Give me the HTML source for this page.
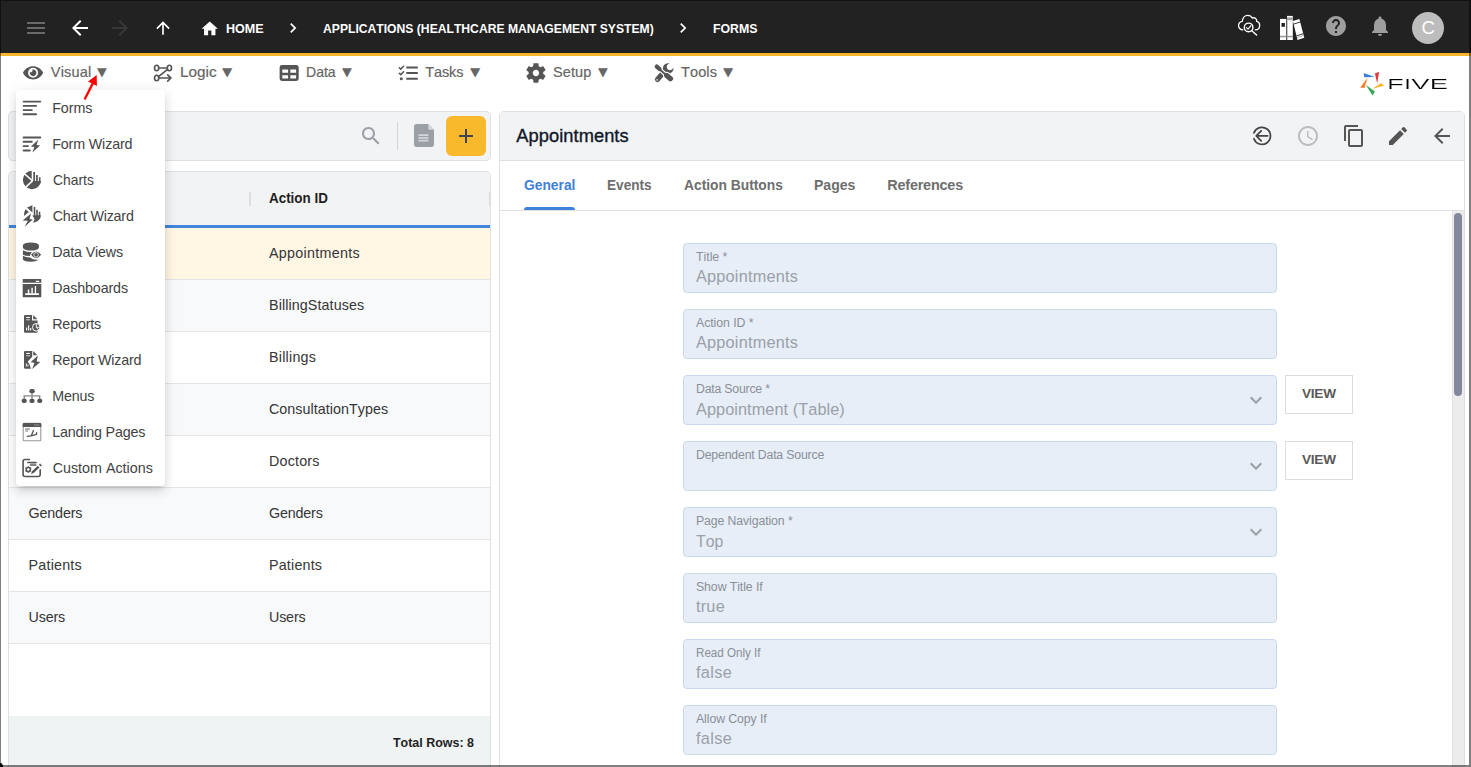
<!DOCTYPE html><html lang="en"><head><meta charset="utf-8"><title>Five - Forms</title><style>
*{box-sizing:border-box;margin:0;padding:0}
html,body{width:1471px;height:767px;overflow:hidden;background:#fff}
body{font-family:"Liberation Sans",sans-serif;position:relative}
.t{position:absolute;white-space:pre;line-height:1;display:block;transform-origin:0 50%;font-kerning:none}
.a{position:absolute}
svg{position:absolute;overflow:visible}
</style></head><body>
<div class="a" style="left:0;top:0;width:1471px;height:53px;background:#222"></div>
<div class="a" style="left:0;top:53px;width:1471px;height:3px;background:#f7b52a"></div>
<svg style="left:23.7px;top:16px" width="24" height="24" viewBox="0 0 24 24" ><path fill="#6a6a6a" d="M3 18h18v-2H3v2zm0-5h18v-2H3v2zm0-7v2h18V6H3z"/></svg>
<svg style="left:68px;top:15.8px" width="24" height="24" viewBox="0 0 24 24" ><path fill="#fff" d="M20 11H7.83l5.59-5.59L12 4l-8 8 8 8 1.41-1.41L7.83 13H20v-2z"/></svg>
<svg style="left:107.6px;top:15.8px" width="24" height="24" viewBox="0 0 24 24" ><path fill="#383838" d="M12 4l-1.41 1.41L16.17 11H4v2h12.17l-5.58 5.59L12 20l8-8z"/></svg>
<svg style="left:153.2px;top:18.2px" width="20" height="20" viewBox="0 0 24 24" ><path fill="#fff" d="M4 12l1.41 1.41L11 7.83V20h2V7.83l5.58 5.59L20 12l-8-8-8 8z"/></svg>
<svg style="left:200.2px;top:18.5px" width="19.5" height="19.5" viewBox="0 0 24 24" ><path fill="#fff" d="M10 20v-6h4v6h5v-8h3L12 3 2 12h3v8z"/></svg>
<span class="t" style="left:225.56px;top:22.10px;font-size:13.4px;font-weight:700;color:#fff;transform:scaleX(0.9386);">HOME</span>
<svg style="left:283px;top:18.3px" width="20" height="20" viewBox="0 0 24 24" ><path fill="#fff" d="M10 6L8.59 7.41 13.17 12l-4.58 4.59L10 18l6-6z"/></svg>
<span class="t" style="left:322.70px;top:22.10px;font-size:13.4px;font-weight:700;color:#fff;transform:scaleX(0.9072);">APPLICATIONS (HEALTHCARE MANAGEMENT SYSTEM)</span>
<svg style="left:673px;top:18.3px" width="20" height="20" viewBox="0 0 24 24" ><path fill="#fff" d="M10 6L8.59 7.41 13.17 12l-4.58 4.59L10 18l6-6z"/></svg>
<span class="t" style="left:712.78px;top:22.10px;font-size:13.4px;font-weight:700;color:#fff;transform:scaleX(0.9198);">FORMS</span>
<svg style="left:0;top:0" width="1471" height="53" viewBox="0 0 1471 53">
<g fill="none" stroke="#fff" stroke-width="1.400" stroke-linecap="round" stroke-linejoin="round">
<g transform="translate(1249 23) scale(0.95) translate(-1249 -23)"><path d="M1242.500 30.200C1239.700 30.200 1237.900 28 1238 25.500C1238.200 22.900 1240 21.400 1242 21.200C1242.300 17.500 1244.800 15 1247.600 15C1250.100 15 1251.700 16.300 1252.500 17.800C1254.800 16.800 1257.200 18.400 1257.200 21.300C1259.200 21.800 1260.300 23.800 1260.200 25.800C1260.100 28.300 1258.300 30.200 1255.600 30.200"/></g>
<circle cx="1248.600" cy="27.400" r="4.300" fill="#222"/>
<path d="M1251.800 30.700L1256.600 35.100"/>
<path stroke-width="1.200" d="M1246.500 27.600L1248 29.100L1251 25.700"/>
</g>
<!-- books -->
<rect x="1280" y="18.900" width="6.300" height="21.100" fill="#fff"/>
<rect x="1281.500" y="23" width="3.400" height="3.800" fill="#222"/>
<rect x="1280" y="35.800" width="6.300" height="1.500" fill="#9a9a9a"/>
<rect x="1287" y="15.900" width="5.800" height="24.100" fill="#fff"/>
<rect x="1287" y="17.400" width="5.800" height="2.900" fill="#a8a8a8"/>
<rect x="1287" y="20.300" width="1" height="19.700" fill="#c8c8c8"/>
<rect x="1287" y="35.800" width="5.800" height="1.500" fill="#9a9a9a"/>
<path fill="#fff" d="M1292.900 20.900L1299.400 18.900L1304.300 37.700L1297.500 40Z"/>
<path stroke="#222" stroke-width="0.900" fill="none" d="M1293.700 24.100L1300.300 22M1296.600 35.800L1303.300 33.700"/>
<path stroke="#9a9a9a" stroke-width="0.800" fill="none" d="M1297 37.600L1303.700 35.500"/>
</svg>
<svg style="left:1324px;top:14px" width="24" height="24" viewBox="0 0 24 24"><path fill="#9e9e9e" d="M12 2C6.480 2 2 6.480 2 12s4.480 10 10 10 10-4.480 10-10S17.520 2 12 2zm1 17h-2v-2h2v2zm2.070-7.750l-.9.920C13.450 12.900 13 13.500 13 15h-2v-.5c0-1.100.45-2.100 1.170-2.830l1.240-1.260c.37-.36.590-.86.590-1.410 0-1.100-.9-2-2-2s-2 .9-2 2H8c0-2.210 1.790-4 4-4s4 1.790 4 4c0 .88-.36 1.680-.93 2.250z"/></svg>
<svg style="left:1368px;top:13.700px" width="24" height="24" viewBox="0 0 24 24"><path fill="#9e9e9e" d="M12 22c1.100 0 2-.9 2-2h-4c0 1.100.89 2 2 2zm6-6v-5c0-3.070-1.640-5.640-4.500-6.320V4c0-.83-.67-1.500-1.500-1.500s-1.500.67-1.500 1.500v.68C7.630 5.360 6 7.920 6 11v5l-2 2v1h16v-1l-2-2z"/></svg>
<div class="a" style="left:1412px;top:12px;width:32px;height:32px;border-radius:50%;background:#bdbdbd"></div>
<span class="t" style="left:1421.400px;top:19.400px;font-size:18.600px;color:#fff">C</span>

<span class="t" style="left:50.84px;top:65.05px;font-size:14.5px;font-weight:400;color:#666;letter-spacing:0.188px;-webkit-text-stroke:0.2px #666;">Visual</span>
<span class="t" style="left:97.26px;top:66.20px;font-size:12.2px;font-weight:400;color:#666;transform:scaleX(1.0418);font-family:'DejaVu Sans',sans-serif;">▼</span>
<span class="t" style="left:179.75px;top:65.05px;font-size:14.5px;font-weight:400;color:#666;transform:scaleX(1.0546);-webkit-text-stroke:0.2px #666;">Logic</span>
<span class="t" style="left:221.96px;top:66.20px;font-size:12.2px;font-weight:400;color:#666;transform:scaleX(1.0955);font-family:'DejaVu Sans',sans-serif;">▼</span>
<span class="t" style="left:305.85px;top:65.05px;font-size:14.5px;font-weight:400;color:#666;transform:scaleX(0.9681);-webkit-text-stroke:0.2px #666;">Data</span>
<span class="t" style="left:342.36px;top:66.20px;font-size:12.2px;font-weight:400;color:#666;transform:scaleX(1.0525);font-family:'DejaVu Sans',sans-serif;">▼</span>
<span class="t" style="left:425.27px;top:65.05px;font-size:14.5px;font-weight:400;color:#666;letter-spacing:-0.105px;-webkit-text-stroke:0.2px #666;">Tasks</span>
<span class="t" style="left:469.96px;top:66.20px;font-size:12.2px;font-weight:400;color:#666;transform:scaleX(1.0955);font-family:'DejaVu Sans',sans-serif;">▼</span>
<span class="t" style="left:553.04px;top:65.05px;font-size:14.5px;font-weight:400;color:#666;letter-spacing:0.094px;-webkit-text-stroke:0.2px #666;">Setup</span>
<span class="t" style="left:597.76px;top:66.20px;font-size:12.2px;font-weight:400;color:#666;transform:scaleX(1.0418);font-family:'DejaVu Sans',sans-serif;">▼</span>
<span class="t" style="left:680.97px;top:65.05px;font-size:14.5px;font-weight:400;color:#666;letter-spacing:0.123px;-webkit-text-stroke:0.2px #666;">Tools</span>
<span class="t" style="left:722.86px;top:66.20px;font-size:12.2px;font-weight:400;color:#666;transform:scaleX(1.0848);font-family:'DejaVu Sans',sans-serif;">▼</span>
<svg style="left:0;top:0" width="800" height="100" viewBox="0 0 800 100">
<!-- eye -->
<g transform="translate(23.05,63.9) scale(0.03481)"><path fill="#555" d="M572.52 241.400C518.290 135.590 410.930 64 288 64S57.680 135.640 3.480 241.410a32.350 32.350 0 0 0 0 29.190C57.710 376.410 165.070 448 288 448s230.320-71.640 284.520-177.410a32.350 32.350 0 0 0 0-29.190zM288 400a144 144 0 1 1 144-144 143.930 143.930 0 0 1-144 144zm0-240a95.310 95.310 0 0 0-25.310 3.790 47.850 47.850 0 0 1-66.900 66.900A95.780 95.780 0 1 0 288 160z"/></g>
<!-- logic -->
<g fill="none" stroke="#555" stroke-width="1.65" stroke-linecap="round" stroke-linejoin="round">
<ellipse cx="156.65" cy="68" rx="2.1" ry="2.75"/><ellipse cx="169.4" cy="68" rx="2.1" ry="2.75"/><ellipse cx="156.65" cy="77.95" rx="2.1" ry="2.75"/>
<path d="M158.9 68H167.2M167.6 69.3L158.5 76.6M158.9 77.95H170.9M167.7 74.8L170.9 77.95L167.7 81.1"/>
</g>
<!-- data -->
<path fill="#555" fill-rule="evenodd" d="M282 65H296.300A2.400 2.400 0 0 1 298.700 67.400V78.500A2.400 2.400 0 0 1 296.300 80.900H282A2.400 2.400 0 0 1 279.600 78.500V67.400A2.400 2.400 0 0 1 282 65ZM282.300 69.600V72.800H288.100V69.600ZM290.300 69.600V72.800H296.100V69.600ZM282.300 75.200V78.400H288.100V75.200ZM290.300 75.200V78.400H296.100V75.200Z"/>
<!-- tasks -->
<g fill="none" stroke="#555" stroke-width="2" stroke-linecap="butt">
<path d="M406.300 67.600H417.800M406.300 73.100H417.800M406.300 78.700H417.800"/>
<path stroke-width="1.500" stroke-linecap="round" stroke-linejoin="round" d="M399.300 67.700L400.700 69.100L403.600 66.200M399.300 73.200L400.700 74.600L403.600 71.700"/>
</g>
<circle cx="401.300" cy="78.700" r="1.500" fill="#555"/>
<!-- gear -->
<g transform="translate(523.7,60.75) scale(1.02)"><path fill="#555" d="M19.140 12.940c.04-.3.060-.61.060-.94 0-.32-.02-.64-.07-.94l2.030-1.580c.18-.14.230-.41.120-.61l-1.920-3.320c-.12-.22-.37-.29-.59-.22l-2.390.96c-.5-.38-1.030-.7-1.620-.94l-.36-2.540c-.04-.24-.24-.41-.48-.41h-3.840c-.24 0-.43.170-.47.410l-.36 2.540c-.59.240-1.130.57-1.620.94l-2.390-.96c-.22-.08-.47 0-.59.220L2.740 8.870c-.12.210-.08.470.12.610l2.030 1.580c-.05.300-.09.630-.09.940s.02.640.07.940l-2.030 1.580c-.18.140-.23.410-.12.610l1.920 3.320c.12.220.37.290.59.220l2.390-.96c.5.380 1.030.7 1.620.94l.36 2.540c.05.240.24.410.48.410h3.840c.24 0 .44-.17.470-.41l.36-2.540c.59-.24 1.130-.56 1.620-.94l2.390.96c.22.080.47 0 .59-.22l1.920-3.320c.12-.22.070-.47-.12-.61l-2.010-1.580zM12 15.1c-1.71 0-3.1-1.39-3.1-3.1s1.39-3.1 3.1-3.1 3.1 1.39 3.1 3.1-1.39 3.1-3.1 3.1z"/></g>
<!-- tools -->
<path fill="none" stroke="#555" stroke-width="5" stroke-linecap="round" d="M662.6 73.500L657.400 79.500"/>
<path fill="#555" d="M669.600 63.400A5.300 5.300 0 1 0 673.400 67.600A3.500 3.500 0 0 1 667.200 68.700A3.500 3.500 0 0 1 669.600 63.400Z"/>
<g fill="none" stroke="#fff">
<path stroke-width="4.200" d="M659.800 69.500L665.600 74.600"/>
<path stroke-width="7.400" stroke-linecap="round" d="M666.900 75.700L670.500 78.700"/>
</g>
<g fill="none" stroke="#555">
<path stroke-width="4.300" stroke-linecap="round" d="M656.800 66.600L659.500 69"/>
<path stroke-width="1.900" d="M659.500 69.200L666.400 75.300"/>
<path stroke-width="5.200" stroke-linecap="round" d="M666.700 75.500L670.500 78.700"/>
</g>
<rect x="656.300" y="79" width="1.700" height="1.700" rx=".4" fill="#c8c8c8"/>
</svg>

<svg style="left:0;top:0" width="1471" height="100" viewBox="0 0 1471 100">
<path fill="#3b7ddd" d="M1363.700 73L1364.200 77.200L1374.800 77Z"/>
<path fill="#e03a3e" d="M1374.900 73.500L1379.100 71.800L1377.200 83.600Z"/>
<path fill="#f9b52c" d="M1372.300 88.800L1381.200 83.100L1384.200 85.700Z"/>
<path fill="#34a853" d="M1365.900 85.100L1374.900 91.400L1372.600 95.500Z"/>
<path fill="#ff7f27" d="M1367.600 77.700L1360.200 87.400L1364.500 87.900Z"/>
</svg>
<span class="t" style="left:1387.3px;top:76.600px;font-size:14.500px;color:#000;transform:scaleX(1.89);will-change:transform;-webkit-text-stroke:0.180px #fff">FIVE</span>

<div class="a" style="left:8px;top:111px;width:483px;height:50px;background:#f2f3f5;border:1px solid #dfe0e2;border-radius:5px"></div>
<svg style="left:359px;top:124.2px" width="24" height="24" viewBox="0 0 24 24"><path fill="#9aa0a6" d="M15.5 14h-.79l-.28-.27C15.41 12.59 16 11.11 16 9.5 16 5.91 13.09 3 9.500 3S3 5.910 3 9.500 5.910 16 9.500 16c1.610 0 3.090-.59 4.230-1.570l.27.28v.79l5 4.990L20.490 19l-4.990-5zm-6 0C7.010 14 5 11.990 5 9.500S7.010 5 9.500 5 14 7.010 14 9.500 11.990 14 9.500 14z"/></svg>
<div class="a" style="left:397px;top:122px;width:1px;height:28px;background:#d2d3d6"></div>
<svg style="left:414px;top:124.3px" width="20" height="23" viewBox="0 0 20 23"><path fill="#9aa0a6" d="M2.600 0H14.300L20 5.700V20.400C20 21.840 18.840 23 17.400 23H2.600C1.160 23 0 21.840 0 20.400V2.600C0 1.160 1.160 0 2.600 0Z"/><path fill="#d5d8db" d="M14.300 0L20 5.700H15.600C14.880 5.700 14.300 5.120 14.300 4.400Z"/><path fill="#d3d6d9" d="M4.400 10.300h10v1.700H4.400zM4.400 13h10v1.700H4.400zM4.400 15.700h10v1.700H4.400z"/></svg>
<div class="a" style="left:446px;top:116px;width:40px;height:40px;background:#f8b92c;border-radius:6px"></div>
<svg style="left:454px;top:124px" width="24" height="24" viewBox="0 0 24 24"><path fill="#41454f" d="M19 13h-6v6h-2v-6H5v-2h6V5h2v6h6v2z"/></svg>

<div class="a" style="left:8px;top:171px;width:483px;height:600px;background:#fff;border:1px solid #dfe0e2;border-radius:5px 5px 0 0;overflow:hidden"><div class="a" style="left:0;top:0;width:481px;height:53px;background:#f2f3f5"></div><div class="a" style="left:0;top:53px;width:481px;height:3px;background:#4285da"></div></div>
<div class="a" style="left:9px;top:228px;width:481px;height:51px;background:#fff6e4"></div>
<div class="a" style="left:9px;top:279px;width:481px;height:1px;background:#e4e5e7"></div>
<span class="t" style="left:269.00px;top:246.15px;font-size:14.3px;font-weight:400;color:#353535;letter-spacing:0.289px;">Appointments</span>
<span class="t" style="left:28.60px;top:246.15px;font-size:14.3px;font-weight:400;color:#353535;letter-spacing:0.289px;">Appointments</span>
<div class="a" style="left:9px;top:280px;width:481px;height:51px;background:#f8f9fb"></div>
<div class="a" style="left:9px;top:331px;width:481px;height:1px;background:#e4e5e7"></div>
<span class="t" style="left:269.00px;top:298.15px;font-size:14.3px;font-weight:400;color:#353535;letter-spacing:0.102px;">BillingStatuses</span>
<span class="t" style="left:28.60px;top:298.15px;font-size:14.3px;font-weight:400;color:#353535;letter-spacing:0.102px;">BillingStatuses</span>
<div class="a" style="left:9px;top:332px;width:481px;height:51px;background:#fff"></div>
<div class="a" style="left:9px;top:383px;width:481px;height:1px;background:#e4e5e7"></div>
<span class="t" style="left:269.00px;top:350.15px;font-size:14.3px;font-weight:400;color:#353535;letter-spacing:0.231px;">Billings</span>
<span class="t" style="left:28.60px;top:350.15px;font-size:14.3px;font-weight:400;color:#353535;letter-spacing:0.231px;">Billings</span>
<div class="a" style="left:9px;top:384px;width:481px;height:51px;background:#f8f9fb"></div>
<div class="a" style="left:9px;top:435px;width:481px;height:1px;background:#e4e5e7"></div>
<span class="t" style="left:269.00px;top:402.15px;font-size:14.3px;font-weight:400;color:#353535;letter-spacing:0.049px;">ConsultationTypes</span>
<span class="t" style="left:28.60px;top:402.15px;font-size:14.3px;font-weight:400;color:#353535;letter-spacing:0.049px;">ConsultationTypes</span>
<div class="a" style="left:9px;top:436px;width:481px;height:51px;background:#fff"></div>
<div class="a" style="left:9px;top:487px;width:481px;height:1px;background:#e4e5e7"></div>
<span class="t" style="left:269.00px;top:454.15px;font-size:14.3px;font-weight:400;color:#353535;letter-spacing:0.191px;">Doctors</span>
<span class="t" style="left:28.60px;top:454.15px;font-size:14.3px;font-weight:400;color:#353535;letter-spacing:0.191px;">Doctors</span>
<div class="a" style="left:9px;top:488px;width:481px;height:51px;background:#f8f9fb"></div>
<div class="a" style="left:9px;top:539px;width:481px;height:1px;background:#e4e5e7"></div>
<span class="t" style="left:269.00px;top:506.15px;font-size:14.3px;font-weight:400;color:#353535;letter-spacing:-0.172px;">Genders</span>
<span class="t" style="left:28.60px;top:506.15px;font-size:14.3px;font-weight:400;color:#353535;letter-spacing:-0.172px;">Genders</span>
<div class="a" style="left:9px;top:540px;width:481px;height:51px;background:#fff"></div>
<div class="a" style="left:9px;top:591px;width:481px;height:1px;background:#e4e5e7"></div>
<span class="t" style="left:269.00px;top:558.15px;font-size:14.3px;font-weight:400;color:#353535;letter-spacing:0.192px;">Patients</span>
<span class="t" style="left:28.60px;top:558.15px;font-size:14.3px;font-weight:400;color:#353535;letter-spacing:0.192px;">Patients</span>
<div class="a" style="left:9px;top:592px;width:481px;height:51px;background:#f8f9fb"></div>
<div class="a" style="left:9px;top:643px;width:481px;height:1px;background:#e4e5e7"></div>
<span class="t" style="left:269.00px;top:610.15px;font-size:14.3px;font-weight:400;color:#353535;letter-spacing:-0.181px;">Users</span>
<span class="t" style="left:28.60px;top:610.15px;font-size:14.3px;font-weight:400;color:#353535;letter-spacing:-0.181px;">Users</span>
<span class="t" style="left:269.47px;top:191.10px;font-size:14.4px;font-weight:700;color:#1f1f1f;transform:scaleX(0.9320);">Action ID</span>
<span class="t" style="left:29.24px;top:191.10px;font-size:14.4px;font-weight:700;color:#1f1f1f;">Title</span>
<div class="a" style="left:249px;top:192px;width:2px;height:14px;background:#dcdde0"></div>
<div class="a" style="left:489px;top:192px;width:1px;height:14px;background:#dcdde0"></div>
<div class="a" style="left:9px;top:716px;width:481px;height:51px;background:#eff3f4"></div>
<span class="t" style="left:392.76px;top:736.30px;font-size:13px;font-weight:700;color:#1f1f1f;transform:scaleX(0.9576);">Total Rows: 8</span>
<div class="a" style="left:499px;top:111px;width:966px;height:670px;background:#fff;border:1px solid #dfe0e2;border-radius:5px 5px 0 0;overflow:hidden"><div class="a" style="left:0;top:0;width:964px;height:48px;background:#f2f3f5"></div><div class="a" style="left:0;top:48px;width:964px;height:1px;background:#dfe0e2"></div><div class="a" style="left:0;top:98px;width:964px;height:1px;background:#dfe0e2"></div></div>
<span class="t" style="left:516.26px;top:126.65px;font-size:18.3px;font-weight:400;color:#111827;letter-spacing:0.054px;-webkit-text-stroke:0.35px #111827;">Appointments</span>
<span class="t" style="left:523.93px;top:178.10px;font-size:14.4px;font-weight:700;color:#3f80d8;transform:scaleX(0.9593);">General</span>
<div class="a" style="left:524px;top:207px;width:51px;height:3px;background:#3f80d8;border-radius:3px 3px 0 0"></div>
<span class="t" style="left:606.89px;top:178.10px;font-size:14.4px;font-weight:700;color:#6e6e6e;transform:scaleX(0.9460);">Events</span>
<span class="t" style="left:683.86px;top:178.10px;font-size:14.4px;font-weight:700;color:#6e6e6e;transform:scaleX(0.9586);">Action Buttons</span>
<span class="t" style="left:814.46px;top:178.10px;font-size:14.4px;font-weight:700;color:#6e6e6e;transform:scaleX(0.9762);">Pages</span>
<span class="t" style="left:887.34px;top:178.10px;font-size:14.4px;font-weight:700;color:#6e6e6e;letter-spacing:-0.199px;">References</span>
<svg style="left:1250px;top:124px" width="24" height="24" viewBox="0 0 24 24"><g fill="none" stroke="#454545" stroke-width="1.750" stroke-linecap="round" stroke-linejoin="round"><path d="M3.900 8.950A8.550 8.550 0 1 1 3.900 14.750"/><path d="M17.700 11.850H6.500M11.200 6.900L6.250 11.850L11.200 16.800"/></g></svg>
<svg style="left:1296.300px;top:124px" width="24" height="24" viewBox="0 0 24 24"><path fill="#bdbdbd" d="M11.990 2C6.470 2 2 6.480 2 12s4.470 10 9.990 10C17.520 22 22 17.520 22 12S17.520 2 11.990 2zM12 20c-4.420 0-8-3.580-8-8s3.580-8 8-8 8 3.580 8 8-3.580 8-8 8zm.5-13H11v6l5.250 3.150.75-1.230-4.500-2.670z"/></svg>
<svg style="left:1342.200px;top:124px" width="24" height="24" viewBox="0 0 24 24"><path fill="#555" d="M16 1H4c-1.100 0-2 .9-2 2v14h2V3h12V1zm3 4H8c-1.100 0-2 .9-2 2v14c0 1.100.9 2 2 2h11c1.100 0 2-.9 2-2V7c0-1.100-.9-2-2-2zm0 16H8V7h11v14z"/></svg>
<svg style="left:1386px;top:124px" width="24" height="24" viewBox="0 0 24 24"><path fill="#555" d="M3 17.250V21h3.750L17.810 9.940l-3.750-3.750L3 17.250zM20.710 7.040c.39-.39.390-1.020 0-1.410l-2.340-2.340c-.39-.39-1.020-.39-1.410 0l-1.830 1.830 3.750 3.750 1.830-1.830z"/></svg>
<svg style="left:1430px;top:124.200px" width="24" height="24" viewBox="0 0 24 24"><path fill="#555" d="M20 11H7.830l5.590-5.590L12 4l-8 8 8 8 1.410-1.410L7.830 13H20v-2z"/></svg>

<div class="a" style="left:1452px;top:211px;width:12px;height:560px;background:#ececec;border-left:1px solid #e2e2e2"></div>
<div class="a" style="left:1454px;top:213px;width:8px;height:183px;background:#82899c;border-radius:4px"></div>
<div class="a" style="left:683px;top:243px;width:594px;height:50px;background:#e7eef7;border:1px solid #c9d9ec;border-radius:4px"></div>
<span class="t" style="left:696.00px;top:251.15px;font-size:12.3px;font-weight:400;color:#8a8f98;letter-spacing:-0.008px;">Title *</span>
<span class="t" style="left:696.00px;top:268.15px;font-size:16.3px;font-weight:400;color:#9aa0a8;letter-spacing:0.211px;">Appointments</span>
<div class="a" style="left:683px;top:309px;width:594px;height:50px;background:#e7eef7;border:1px solid #c9d9ec;border-radius:4px"></div>
<span class="t" style="left:696.00px;top:317.15px;font-size:12.3px;font-weight:400;color:#8a8f98;letter-spacing:-0.061px;">Action ID *</span>
<span class="t" style="left:696.00px;top:334.15px;font-size:16.3px;font-weight:400;color:#9aa0a8;letter-spacing:0.211px;">Appointments</span>
<div class="a" style="left:683px;top:375px;width:594px;height:50px;background:#e7eef7;border:1px solid #c9d9ec;border-radius:4px"></div>
<span class="t" style="left:696.00px;top:383.15px;font-size:12.3px;font-weight:400;color:#8a8f98;letter-spacing:-0.215px;">Data Source *</span>
<span class="t" style="left:696.00px;top:401.15px;font-size:16.3px;font-weight:400;color:#9aa0a8;letter-spacing:0.068px;">Appointment (Table)</span>
<svg style="left:1243.5px;top:388.4px" width="24" height="24" viewBox="0 0 24 24" ><path fill="#9a9fa6" d="M7.41 8.59L12 13.17l4.59-4.58L18 10l-6 6-6-6 1.41-1.41z"/></svg>
<div class="a" style="left:683px;top:441px;width:594px;height:50px;background:#e7eef7;border:1px solid #c9d9ec;border-radius:4px"></div>
<span class="t" style="left:696.00px;top:449.15px;font-size:12.3px;font-weight:400;color:#8a8f98;letter-spacing:-0.181px;">Dependent Data Source</span>
<svg style="left:1243.5px;top:454.4px" width="24" height="24" viewBox="0 0 24 24" ><path fill="#9a9fa6" d="M7.41 8.59L12 13.17l4.59-4.58L18 10l-6 6-6-6 1.41-1.41z"/></svg>
<div class="a" style="left:683px;top:507px;width:594px;height:50px;background:#e7eef7;border:1px solid #c9d9ec;border-radius:4px"></div>
<span class="t" style="left:696.00px;top:515.15px;font-size:12.3px;font-weight:400;color:#8a8f98;letter-spacing:-0.111px;">Page Navigation *</span>
<span class="t" style="left:696.01px;top:533.15px;font-size:16.3px;font-weight:400;color:#9aa0a8;transform:scaleX(0.9740);">Top</span>
<svg style="left:1243.5px;top:520.4px" width="24" height="24" viewBox="0 0 24 24" ><path fill="#9a9fa6" d="M7.41 8.59L12 13.17l4.59-4.58L18 10l-6 6-6-6 1.41-1.41z"/></svg>
<div class="a" style="left:683px;top:573px;width:594px;height:50px;background:#e7eef7;border:1px solid #c9d9ec;border-radius:4px"></div>
<span class="t" style="left:696.00px;top:581.15px;font-size:12.3px;font-weight:400;color:#8a8f98;letter-spacing:-0.083px;">Show Title If</span>
<span class="t" style="left:696.00px;top:598.15px;font-size:16.3px;font-weight:400;color:#9aa0a8;letter-spacing:0.212px;">true</span>
<div class="a" style="left:683px;top:639px;width:594px;height:50px;background:#e7eef7;border:1px solid #c9d9ec;border-radius:4px"></div>
<span class="t" style="left:696.06px;top:647.15px;font-size:12.3px;font-weight:400;color:#8a8f98;transform:scaleX(0.9439);">Read Only If</span>
<span class="t" style="left:696.00px;top:664.15px;font-size:16.3px;font-weight:400;color:#9aa0a8;letter-spacing:0.348px;">false</span>
<div class="a" style="left:683px;top:705px;width:594px;height:50px;background:#e7eef7;border:1px solid #c9d9ec;border-radius:4px"></div>
<span class="t" style="left:696.00px;top:713.15px;font-size:12.3px;font-weight:400;color:#8a8f98;letter-spacing:-0.091px;">Allow Copy If</span>
<span class="t" style="left:696.00px;top:730.15px;font-size:16.3px;font-weight:400;color:#9aa0a8;letter-spacing:0.348px;">false</span>
<div class="a" style="left:1285px;top:375px;width:68px;height:39px;background:#fff;border:1px solid #dcdcdc"></div>
<span class="t" style="left:1301.91px;top:387.00px;font-size:13.6px;font-weight:700;color:#5a5a5a;letter-spacing:-0.217px;">VIEW</span>
<div class="a" style="left:1285px;top:441px;width:68px;height:39px;background:#fff;border:1px solid #dcdcdc"></div>
<span class="t" style="left:1301.91px;top:453.00px;font-size:13.6px;font-weight:700;color:#5a5a5a;letter-spacing:-0.217px;">VIEW</span>
<div class="a" style="left:16px;top:90px;width:149px;height:396px;background:#fff;border-radius:4px;box-shadow:0 4px 5px -3px rgba(0,0,0,.16),0 6px 10px 1px rgba(0,0,0,.075),0 2px 13px 2px rgba(0,0,0,.065)"></div>
<span class="t" style="left:52.23px;top:101.15px;font-size:14.3px;font-weight:400;color:#424242;letter-spacing:-0.093px;">Forms</span>
<span class="t" style="left:52.23px;top:137.15px;font-size:14.3px;font-weight:400;color:#424242;letter-spacing:-0.153px;">Form Wizard</span>
<span class="t" style="left:52.69px;top:173.15px;font-size:14.3px;font-weight:400;color:#424242;transform:scaleX(0.9713);">Charts</span>
<span class="t" style="left:52.67px;top:209.15px;font-size:14.3px;font-weight:400;color:#424242;letter-spacing:-0.199px;">Chart Wizard</span>
<span class="t" style="left:52.23px;top:245.15px;font-size:14.3px;font-weight:400;color:#424242;letter-spacing:-0.148px;">Data Views</span>
<span class="t" style="left:52.23px;top:281.15px;font-size:14.3px;font-weight:400;color:#424242;letter-spacing:-0.141px;">Dashboards</span>
<span class="t" style="left:52.23px;top:317.15px;font-size:14.3px;font-weight:400;color:#424242;letter-spacing:-0.180px;">Reports</span>
<span class="t" style="left:52.23px;top:353.15px;font-size:14.3px;font-weight:400;color:#424242;letter-spacing:-0.174px;">Report Wizard</span>
<span class="t" style="left:52.23px;top:389.15px;font-size:14.3px;font-weight:400;color:#424242;letter-spacing:-0.158px;">Menus</span>
<span class="t" style="left:52.23px;top:425.15px;font-size:14.3px;font-weight:400;color:#424242;letter-spacing:-0.185px;">Landing Pages</span>
<span class="t" style="left:52.67px;top:461.15px;font-size:14.3px;font-weight:400;color:#424242;letter-spacing:0.004px;">Custom Actions</span>
<svg style="left:0;top:0" width="170" height="490" viewBox="0 0 170 490">
<path fill="none" stroke="#555" stroke-width="1.9" stroke-linecap="round" d="M23.6 101.600H40.300M23.600 105.900H36.100M23.600 110.100H31.900M23.600 114.300H36.100"/>
<path fill="none" stroke="#555" stroke-width="1.9" stroke-linecap="round" d="M23.600 137.500H40.300M23.600 141.800H31.800M23.600 146.100H28M23.600 150.500H29.800"/>
<path fill="#555" d="M38.300 139.700L30.900 146.500L34.400 146.900L32.300 152.500L40.100 145.400L36.600 145Z"/>
<path fill="#555" d="M31.700 180.700V170.800A9.200 9.200 0 1 0 41.200 181.100H32.200Z"/>
<path stroke="#fff" stroke-width="1.500" fill="none" d="M32.700 181L24 173.400M32.700 180.600L24.500 188.400"/>
<path fill="#555" d="M33.300 172H35V181.500H33.300ZM36.100 175.100H37.800V181.500H36.100ZM38.900 177.300H40.500V181.500H38.900Z"/>
<path fill="#555" d="M32.400 205.200L27 207.500L32.400 212.500ZM25.500 209.200L28.900 211.900L23.900 215.900Q23.900 211.500 25.500 209.200ZM33.700 207H35.300V215.500H33.700ZM36.200 209.800H37.800V215.500H36.200ZM38.800 211.800H40.300V215.500H38.800ZM32.200 215.600Q36 214.400 41 215.200Q40.500 221.500 33.200 222.700L34.500 219.400Q33.800 217 32.200 215.600Z"/>
<path fill="#555" d="M31 213.4L22.7 220.5L27.9 220.8L24.5 226.9L32.7 219.6L29.6 218.9Z"/>
<path fill="#555" d="M22.9 245.3A8 2.9 0 0 1 38.9 245.3V247.7A8 2.9 0 0 1 22.9 247.7ZM22.9 250.2Q26 252.2 31.8 252.3L29.9 256.1Q25 256 22.9 254.7ZM22.9 255.8Q25.5 257.3 30 257.6Q33 260.4 38.7 259.7Q36 261.7 30.9 261.8Q24.5 261.7 22.9 259.5Z"/>
<path fill="#555" stroke="#fff" stroke-width="1" d="M30.7 254.8C32.8 251.7 35 251.2 36.1 251.2C37.2 251.2 39.4 251.7 41.5 254.8C39.4 257.9 37.2 258.4 36.1 258.4C35 258.4 32.8 257.9 30.7 254.8Z"/>
<circle cx="36.1" cy="254.8" r="2.25" fill="#555" stroke="#e8e8e8" stroke-width="0.9"/>
<path fill="#555" d="M23.200 278.900H40.800A.5 .5 0 0 1 41.300 279.400V282.800H22.700V279.400A.5 .5 0 0 1 23.200 278.900ZM22.700 284.100H41.300V296.600A.7 .7 0 0 1 40.600 297.300H23.400A.7 .7 0 0 1 22.700 296.600Z"/>
<path fill="#fff" d="M35.800 280.800H39.200V282H35.800ZM25.200 293.300H38.900V294.900H25.200ZM27.800 289.500H29.300V293.500H27.800ZM34.800 285.900H36.100V293.500H34.800Z"/><path fill="#ddd" d="M31.200 287.700H33V293.500H31.200Z"/>
<path fill="#555" d="M25.200 314.9H32V320.4H37.600V331.5A1.200 1.200 0 0 1 36.400 332.7H25.200A1.200 1.200 0 0 1 24 331.5V316.09999999999997A1.200 1.200 0 0 1 25.200 314.9ZM33.200 315.09999999999997L37.400 319.29999999999995H33.200Z"/><path fill="#fff" d="M26.200 316.9H29.900V318.0H26.200Z"/><path fill="#ccc" d="M26.200 319.2H29.900V320.29999999999995H26.200Z"/>
<path fill="#fff" d="M26.100 327.600H27.200V330.600H26.100ZM28.100 325.200H29.200V330.600H28.100ZM30.100 328H31.200V330.600H30.100Z"/>
<circle cx="36.300" cy="327.300" r="3.800" fill="#555" stroke="#fff" stroke-width="1"/>
<path fill="none" stroke="#fff" stroke-width="0.900" d="M36.300 323.500V327.300H40.200M36.300 327.300L38.600 329.900"/>
<path fill="#555" d="M25.2 350.9H32.2V356.7L27.7 361.7L29.4 364.0L30.9 368.7H25.2A1.2 1.2 0 0 1 24 367.5V352.09999999999997A1.2 1.2 0 0 1 25.2 350.9ZM33.2 351.09999999999997L37.4 355.29999999999995H33.2Z"/>
<path fill="#fff" d="M26.200 352.9H29.900V354.0H26.200Z"/><path fill="#ccc" d="M26.200 355.2H29.900V356.29999999999995H26.200Z"/>
<path fill="#fff" d="M25.800 363.500H26.800V366.600H25.800ZM27.600 364.600H28.500V366.600H27.600Z"/>
<path fill="#555" d="M37.8 355.5L30.6 362.3L34.5 362.8L32.2 369L40.3 361.9L36.7 361.5Z"/>
<path fill="none" stroke="#8a8a8a" stroke-width="1.400" d="M32 393V399M24.200 399V395.900H39.700V399"/>
<rect x="29.300" y="389" width="5.500" height="4.200" rx="2" fill="#555"/><rect x="21.600" y="398.800" width="5.200" height="4.200" rx="2" fill="#555"/><rect x="29.400" y="398.800" width="5.200" height="4.200" rx="2" fill="#555"/><rect x="37.100" y="398.800" width="5.200" height="4.200" rx="2" fill="#555"/>
<rect x="23.200" y="423.400" width="17.600" height="17.400" rx="1.300" fill="#fff" stroke="#999" stroke-width="1.100"/>
<path fill="#555" d="M23.900 422.900H40.100A1.200 1.200 0 0 1 41.300 424.100V427H22.700V424.100A1.200 1.200 0 0 1 23.900 422.900Z"/>
<path fill="#8a8a8a" d="M34 424.400H39.500V425.600H34Z"/><path fill="#b0b0b0" d="M25.200 428H29.900V430H28V431.700H25.200Z"/>
<path fill="none" stroke="#555" stroke-width="1.300" stroke-linecap="round" d="M27.300 436.300Q32 435.600 36.600 434.300M31.600 435L33.400 430.500M36.100 434.300L36.700 432.600"/>
<path fill="none" stroke="#555" stroke-width="1.600" stroke-linecap="round" stroke-linejoin="round" d="M29.400 459.500H25.100A2 2 0 0 0 23.100 461.500V474.500A2 2 0 0 0 25.100 476.500H38.200A2 2 0 0 0 40.200 474.500V469.800"/>
<path fill="none" stroke="#555" stroke-width="1.300" stroke-linecap="round" d="M27.700 462.500H36.200M30.400 465H35.900"/><path stroke="#999" stroke-width="1" d="M30.400 463.800H35.900"/>
<circle cx="28.300" cy="469.500" r="2.100" fill="none" stroke="#555" stroke-width="1.500"/><path stroke="#555" stroke-width="1.300" d="M28.300 466.200V467.200M28.300 471.800V472.800M25.400 467.800L26.300 468.300M30.300 470.700L31.200 471.200M25.400 471.200L26.300 470.700M30.300 468.300L31.200 467.800"/>
<path fill="#555" d="M31 473.900L32 471.300L37.800 465.800L39.500 467.600L33.700 473.100ZM38.900 464.800L40.100 463.600L41.900 465.400L40.700 466.600Z"/>
</svg>
<svg style="left:0;top:0" width="170" height="110" viewBox="0 0 170 110"><path stroke="#ff0000" stroke-width="2.300" fill="none" d="M84.600 99.600L92.700 83.400"/><path fill="#ff0000" d="M96.700 74.900L88 81.600L96.900 85.900Z"/></svg>
<div class="a" style="left:0;top:0;width:1471px;height:767px;border-style:solid;border-color:rgba(0,0,0,.5);border-width:1px 2px 2px 1px;pointer-events:none;z-index:100"></div>
<div class="a" style="left:0;top:763px;width:3px;height:4px;background:#000;border-top-right-radius:100%;z-index:101"></div>
</body></html>
